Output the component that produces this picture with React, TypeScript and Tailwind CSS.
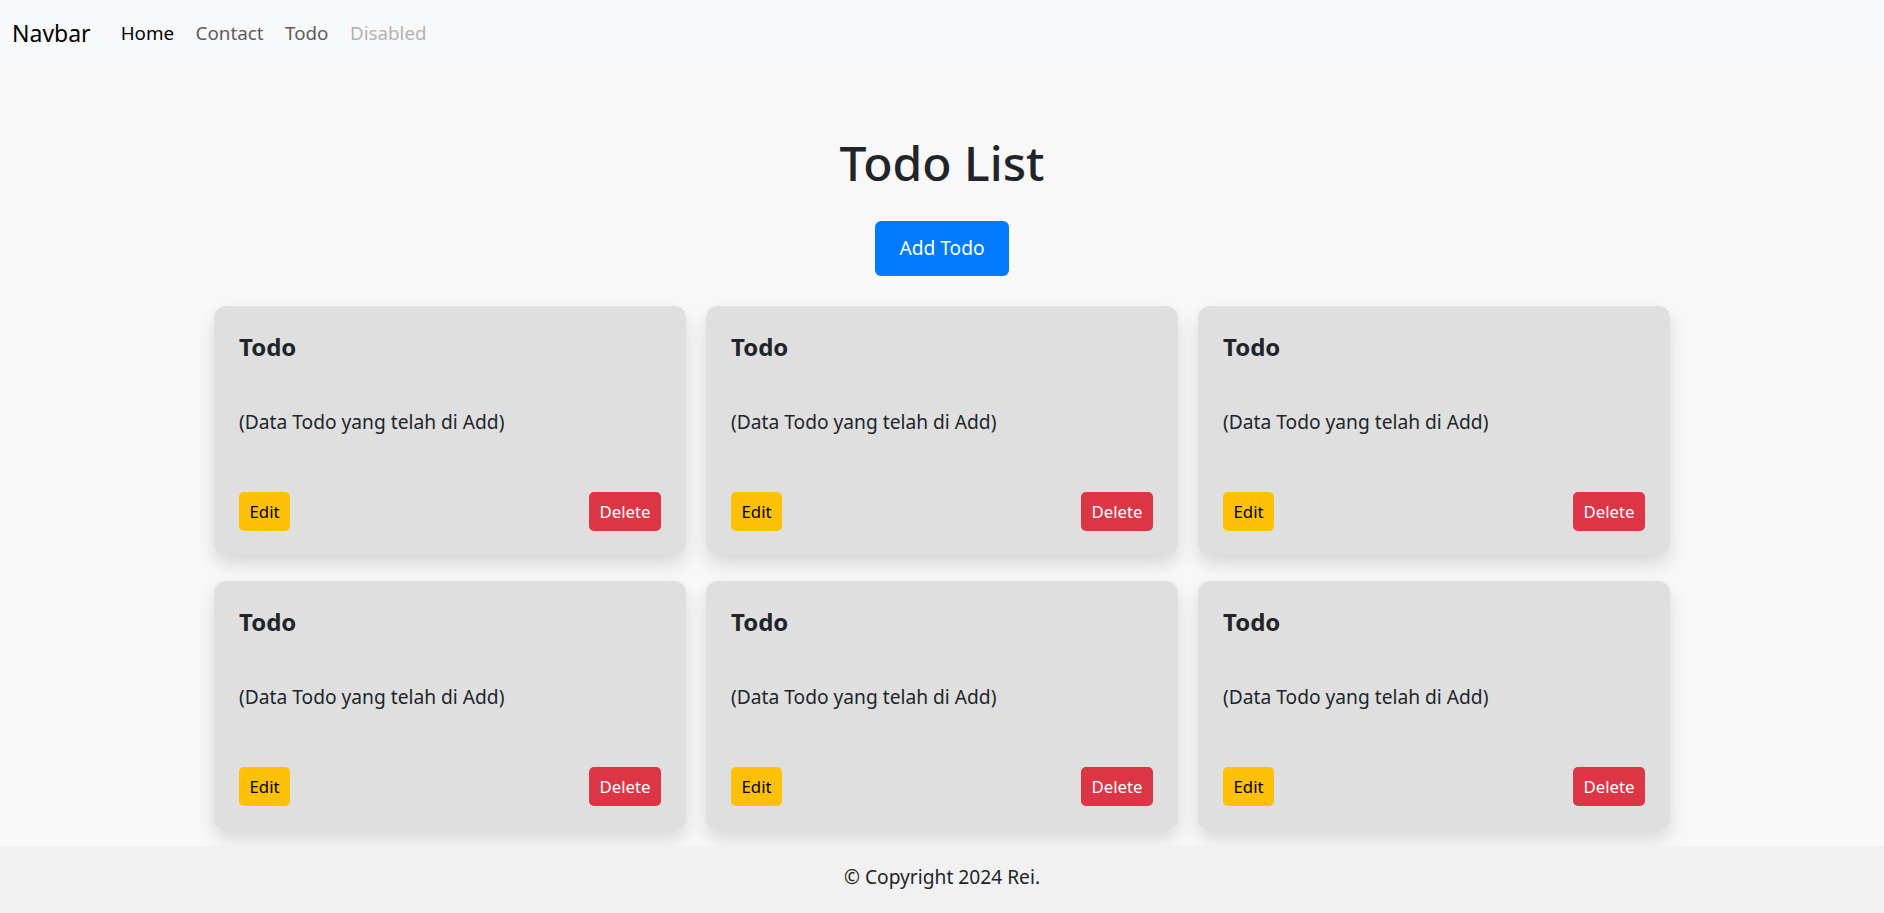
import React from "react";

const font = { fontFamily: '"Noto Sans", "Open Sans", sans-serif' };

function Card() {
  return (
    <div className="flex h-[249px] flex-col rounded-[12px] bg-[#dfdfdf] px-[25px] shadow-[0_9px_18px_rgba(0,0,0,0.13)]">
      <h5 className="mt-[26px] text-[24px] font-bold leading-[29px] text-[#212529]">Todo</h5>
      <p className="mt-[46px] text-[19.2px] leading-[29px] text-[#212529]">(Data Todo yang telah di Add)</p>
      <div className="mt-auto mb-[24px] flex items-center justify-between">
        <button className="h-[39px] rounded-[5px] bg-[#ffc107] px-[10.5px] text-[16.8px] text-[#000]">Edit</button>
        <button className="h-[39px] rounded-[5px] bg-[#dc3545] px-[10.5px] text-[16.8px] text-white">Delete</button>
      </div>
    </div>
  );
}

export default function App() {
  return (
    <div className="flex min-h-screen flex-col bg-[#f8f8f8] text-[#212529]" style={font}>
      <nav className="flex h-[67px] items-center bg-[#f8f9fa] px-[12px]">
        <span className="mr-[30px] text-[23px] text-black">Navbar</span>
        <div className="flex items-center gap-[21.5px] text-[18.8px]">
          <a className="text-black">Home</a>
          <a className="text-[#5c5c5c]">Contact</a>
          <a className="text-[#5c5c5c]">Todo</a>
          <a className="text-[#b3b3b3]">Disabled</a>
        </div>
      </nav>
      <main className="flex flex-1 flex-col items-center">
        <h1 className="mt-[67px] text-[48px] font-medium leading-[58px] text-[#212529]">Todo List</h1>
        <button className="mt-[29px] h-[55px] rounded-[6px] bg-[#007bff] px-[24.5px] text-[19.2px] text-white">Add Todo</button>
        <div className="mt-[30px] grid w-[1456px] grid-cols-3 gap-x-[20px] gap-y-[26px]">
          {Array.from({ length: 6 }).map((_, i) => (
            <Card key={i} />
          ))}
        </div>
      </main>
      <footer className="mt-[16px] flex h-[67px] items-center justify-center bg-[#f1f1f1] pb-[5px] text-[19.2px] text-[#212529]">
        © Copyright 2024 Rei.
      </footer>
    </div>
  );
}
